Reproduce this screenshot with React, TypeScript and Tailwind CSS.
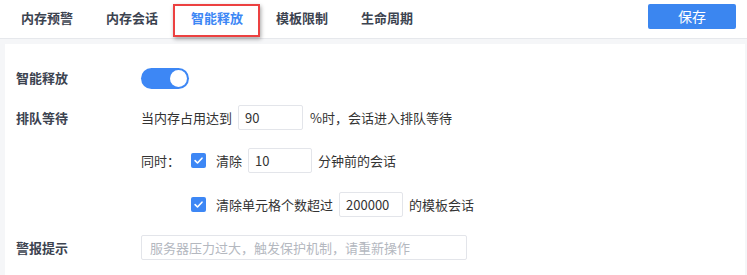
import React from "react";

const font = { fontFamily: '"Noto Sans CJK SC", "Noto Sans", sans-serif' };

function Check() {
  return (
    <span className="flex h-[15px] w-[15px] items-center justify-center rounded-[2px] bg-[#3d87f5]">
      <svg width="11" height="11" viewBox="0 0 12 12" fill="none">
        <path d="M2.3 6.2 L4.9 8.7 L9.8 3.5" stroke="white" strokeWidth="1.8" strokeLinecap="round" strokeLinejoin="round" />
      </svg>
    </span>
  );
}

function Box({ value, w }: { value: string; w: string }) {
  return (
    <span className={`flex h-[25px] ${w} items-center rounded-[2px] border border-[#e3e5ea] bg-white pl-[6px] text-[13px] text-[#333]`}>
      {value}
    </span>
  );
}

export default function App() {
  const tabs = ["内存预警", "内存会话", "智能释放", "模板限制", "生命周期"];
  return (
    <div className="h-[275px] w-[747px] overflow-hidden bg-[#f5f6f8]" style={font}>
      <div className="flex h-[39px] items-start border-b border-[#e6e8ec] bg-white">
        <div className="flex h-[38px] items-start pl-[21px] gap-[33px]">
          {tabs.map((t, i) => (
            <div key={t} className="relative h-[38px] pt-[7px] leading-[19px]">
              <span className={`text-[13px] font-bold ${i === 2 ? "text-[#3d87f5]" : "text-[#3c4350]"}`}>{t}</span>
              {i === 2 && (
                <span className="absolute left-[-18px] top-[4px] h-[33px] w-[87px] border-2 border-[#ec4141] shadow-[1px_2px_4px_rgba(0,0,0,0.35)]" />
              )}
            </div>
          ))}
        </div>
        <div className="ml-auto mr-[11px] mt-[4px] flex h-[25px] w-[88px] items-center justify-center rounded-[2px] bg-[#3b86f0] text-[14px] text-white">
          保存
        </div>
      </div>
      <div className="ml-[5px] mr-[2px] mt-[5px] h-[300px] bg-white pl-[11px] pt-[23px] text-[13px] text-[#333]">
        <div className="flex h-[22px] items-center">
          <span className="w-[125px] font-bold text-[#3c4350]">智能释放</span>
          <span className="flex h-[21px] w-[48px] items-center justify-end rounded-full bg-[#3d87f5] pr-[2px]">
            <span className="h-[17px] w-[17px] rounded-full bg-white" />
          </span>
        </div>
        <div className="mt-[16px] flex h-[25px] items-center">
          <span className="w-[125px] font-bold text-[#3c4350]">排队等待</span>
          <span>当内存占用达到</span>
          <span className="ml-[6px]"><Box value="90" w="w-[65px]" /></span>
          <span className="ml-[7px]">%时，会话进入排队等待</span>
        </div>
        <div className="mt-[18px] flex h-[25px] items-center pl-[125px]">
          <span className="w-[50px]">同时：</span>
          <Check />
          <span className="ml-[10px]">清除</span>
          <span className="ml-[6px]"><Box value="10" w="w-[64px]" /></span>
          <span className="ml-[6px]">分钟前的会话</span>
        </div>
        <div className="mt-[19px] flex h-[25px] items-center pl-[175px]">
          <Check />
          <span className="ml-[10px]">清除单元格个数超过</span>
          <span className="ml-[6px]"><Box value="200000" w="w-[64px]" /></span>
          <span className="ml-[6px]">的模板会话</span>
        </div>
        <div className="mt-[18px] flex h-[25px] items-center">
          <span className="w-[125px] font-bold text-[#3c4350]">警报提示</span>
          <span className="flex h-[25px] w-[326px] items-center rounded-[2px] border border-[#e3e5ea] pl-[8px] text-[13px] text-[#b4b8bf]">
            服务器压力过大，触发保护机制，请重新操作
          </span>
        </div>
      </div>
    </div>
  );
}
